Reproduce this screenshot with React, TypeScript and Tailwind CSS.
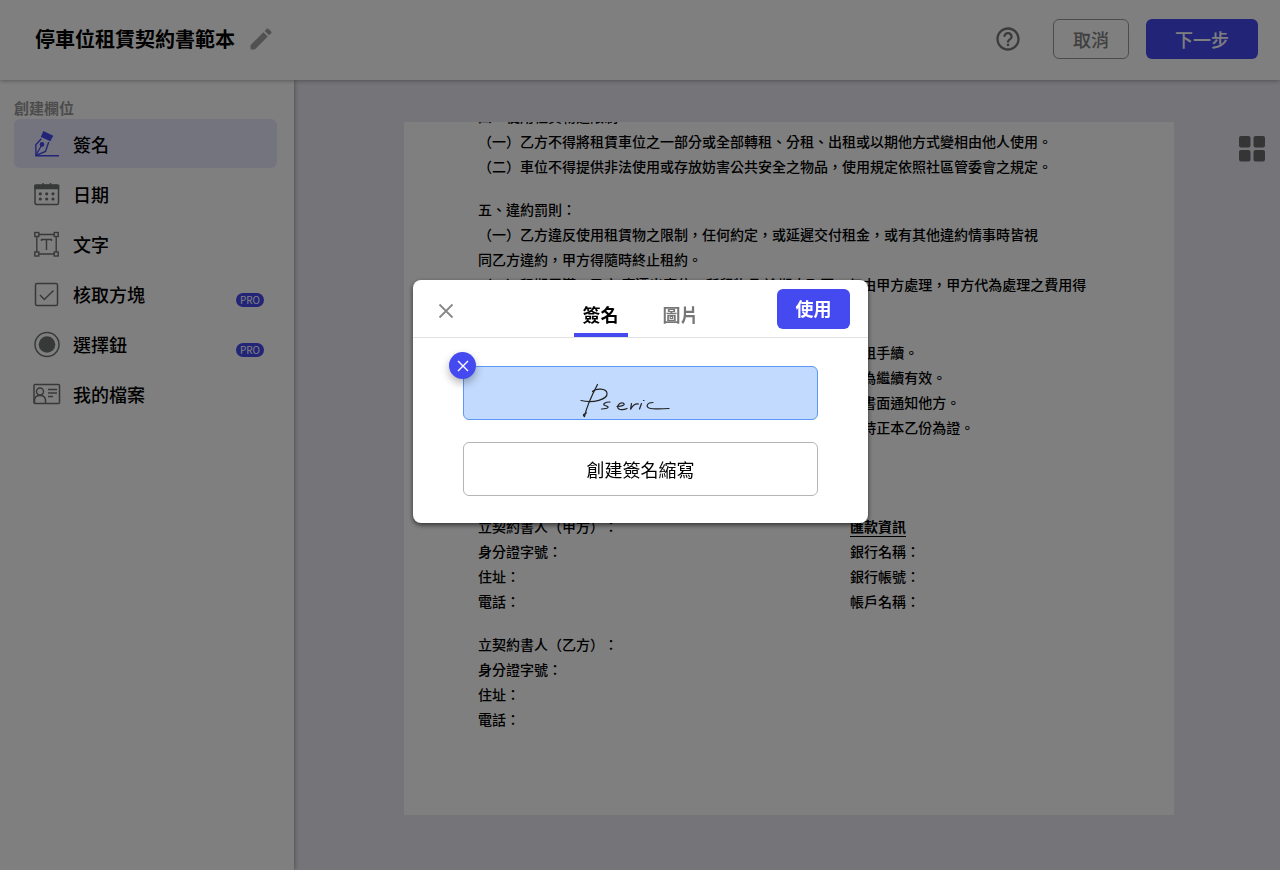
import React, { useState } from "react";

interface Field {
  name: string;
  icon: React.ReactNode;
  pro?: boolean;
}

const fields: Field[] = [
  {
    name: "簽名",
    icon: (
      <svg viewBox="0 0 28 28" className="h-7 w-7" fill="none" stroke="#4549f0" strokeWidth="1.4">
        <path d="M10.300 1 20.300 5.700 17.300 11.300 7.800 7z" fill="#4549f0" stroke="none" />
        <path d="M8.300 8.800 2.800 14.800 3 25.500 12.500 21.500 15.700 12" />
        <path d="M3 25 8.500 15.500M2.500 25.800h23.500" />
        <circle cx="9" cy="14.500" r="1.700" fill="#4549f0" />
      </svg>
    ),
  },
  {
    name: "日期",
    icon: (
      <svg viewBox="0 0 28 28" className="h-7 w-7" fill="none" stroke="#6f7270" strokeWidth="1.5">
        <rect x="2" y="5" width="23.5" height="19.5" rx="1.5" />
        <path d="M2 5.500h23.5v3H2z" fill="#6f7270" />
        <path d="M10 3v3M17.500 3v3" />
        <g fill="#6f7270" stroke="none">
          <circle cx="7.3" cy="13.8" r="1.6" />
          <circle cx="13.700" cy="13.8" r="1.6" />
          <circle cx="20" cy="13.8" r="1.6" />
          <circle cx="7.3" cy="19" r="1.6" />
          <circle cx="13.700" cy="19" r="1.6" />
          <circle cx="20" cy="19" r="1.6" />
        </g>
      </svg>
    ),
  },
  {
    name: "文字",
    icon: (
      <svg viewBox="0 0 28 28" className="h-7 w-7" fill="none" stroke="#6f7270" strokeWidth="1.4">
        <path d="M6 4.500h15M6 24h15M3.800 6.500v15.500M23.200 6.500v15.500M8.500 11V9.500h10V11M13.500 9.500v10.500" />
        <rect x="1.8" y="2.5" width="4" height="4" />
        <rect x="21.2" y="2.5" width="4" height="4" />
        <rect x="1.8" y="22" width="4" height="4" />
        <rect x="21.2" y="22" width="4" height="4" />
      </svg>
    ),
  },
  {
    name: "核取方塊",
    pro: true,
    icon: (
      <svg viewBox="0 0 28 28" className="h-7 w-7" fill="none" stroke="#6f7270" strokeWidth="1.5">
        <rect x="2.5" y="3.5" width="22" height="22" rx="1.5" />
        <path d="m7 15 4.300 4.500L20.500 10.500" />
      </svg>
    ),
  },
  {
    name: "選擇鈕",
    pro: true,
    icon: (
      <svg viewBox="0 0 28 28" className="h-7 w-7" fill="none" stroke="#6f7270" strokeWidth="1.5">
        <circle cx="14" cy="14.5" r="12" />
        <circle cx="14" cy="14.5" r="8.3" fill="#6f7270" stroke="none" />
      </svg>
    ),
  },
  {
    name: "我的檔案",
    icon: (
      <svg viewBox="0 0 28 28" className="h-7 w-7" fill="none" stroke="#6f7270" strokeWidth="1.5">
        <rect x="1" y="4.500" width="25.5" height="19" rx="1" />
        <circle cx="7" cy="11.500" r="3.5" />
        <path d="M1.500 23v-2.500c0-3 2-5 5.500-5s5.500 2 5.500 5V23M15 9.500h9M15 13h9M15 16.500h5" />
      </svg>
    ),
  },
];

const clauses: string[][] = [
  [
    "四、使用租賃物之限制",
    "（一）乙方不得將租賃車位之一部分或全部轉租、分租、出租或以期他方式變相由他人使用。",
    "（二）車位不得提供非法使用或存放妨害公共安全之物品，使用規定依照社區管委會之規定。",
  ],
  [
    "五、違約罰則：",
    "（一）乙方違反使用租賃物之限制，任何約定，或延遲交付租金，或有其他違約情事時皆視",
    "同乙方違約，甲方得隨時終止租約。",
    "（二）租期屆滿，乙方 應遷出車位，所留物品 逾期未取回，任由甲方處理，甲方代為處理之費用得",
    "向乙方求償。",
  ],
  [
    "六、租賃期滿 乙方如不續租，應於屆滿前 通知甲方並應辦理退租手續。",
    "七、租賃期滿 雙方如無異議，且乙方照常 給付租金者，本約視為繼續有效。",
    "八、租賃期間內 任何一方欲提前終止契約，應於 一個月之前以書面通知他方。",
    "九、本契約書 自簽約之日起生效，一式兩份，由 甲乙雙方各執持正本乙份為證。",
  ],
];

const Header: React.FC = () => {
  return (
    <header className="relative z-10 flex h-20 items-center justify-between bg-white pr-[22px] pb-0.5 pl-[35px] shadow-[0_1px_4px_rgba(0,0,0,0.3)]">
      <div className="flex items-center gap-3">
        <h1 className="text-xl font-bold">停車位租賃契約書範本</h1>
        <button aria-label="重新命名">
          <svg viewBox="0 0 24 24" className="h-7 w-7" fill="#a3a3a3">
            <path d="M3 17.250V21h3.750L17.810 9.940l-3.750-3.750L3 17.250zM20.710 7.040a1 1 0 0 0 0-1.410l-2.340-2.340a1 1 0 0 0-1.410 0l-1.830 1.830 3.750 3.750 1.830-1.830z" />
          </svg>
        </button>
      </div>
      <div className="flex items-center text-lg font-medium">
        <button aria-label="說明" className="mr-[31px]">
          <svg viewBox="0 0 24 24" className="h-7 w-7" fill="#777">
            <path d="M11 18h2v-2h-2v2zm1-16C6.480 2 2 6.480 2 12s4.480 10 10 10 10-4.480 10-10S17.520 2 12 2zm0 18c-4.410 0-8-3.590-8-8s3.590-8 8-8 8 3.590 8 8-3.590 8-8 8zm0-14c-2.210 0-4 1.790-4 4h2c0-1.100.9-2 2-2s2 .9 2 2c0 2-3 1.750-3 5h2c0-2.250 3-2.500 3-5 0-2.210-1.790-4-4-4z" />
          </svg>
        </button>
        <button className="mr-[17px] h-10 w-[76px] rounded-md border border-[#999] text-[#808080]">取消</button>
        <button className="h-10 w-28 rounded-md bg-[#4549f0] text-white">下一步</button>
      </div>
    </header>
  );
};

const Sidebar: React.FC = () => {
  const [active, setActive] = useState(0);

  return (
    <aside className="w-[294px] shrink-0 bg-white pt-4 pr-[17px] pl-[14px] shadow-[1px_0_4px_rgba(0,0,0,0.3)]">
      <h2 className="text-[15px] leading-[23px] font-bold text-[#999]">創建欄位</h2>
      <nav className="flex flex-col gap-px">
        {fields.map((field, i) => (
          <button
            key={field.name}
            onClick={() => setActive(i)}
            className={`flex h-[49px] w-full items-center rounded-md px-[19px] text-lg font-medium ${
              active === i ? "bg-[#e9e9ff]" : ""
            }`}
          >
            {field.icon}
            <span className="ml-3">{field.name}</span>
            {field.pro && (
              <span className="mt-3 -mr-1.5 ml-auto rounded-full bg-[#4549f0] px-1 text-[10px] leading-[14px] font-normal text-white">
                PRO
              </span>
            )}
          </button>
        ))}
      </nav>
    </aside>
  );
};

const Contract: React.FC = () => {
  return (
    <article className="min-w-0 flex-1 overflow-hidden bg-white pb-[83px] pl-[74px] text-sm leading-[25px] font-medium whitespace-nowrap [text-spacing-trim:space-all]">
      {/* scrolled a little, so the first heading is half out of view */}
      <div className="-mt-[18px] flex flex-col gap-[18px]">
        {clauses.map((lines) => (
          <section key={lines[0]}>
            {lines.map((line) => (
              <p key={line}>{line}</p>
            ))}
          </section>
        ))}
        <section className="mt-14 grid grid-cols-[372px_1fr]">
          <div>
            <p>立契約書人（甲方）：</p>
            <p>身分證字號：</p>
            <p>住址：</p>
            <p>電話：</p>
          </div>
          <div>
            <h3 className="font-bold underline underline-offset-4">匯款資訊</h3>
            <p>銀行名稱：</p>
            <p>銀行帳號：</p>
            <p>帳戶名稱：</p>
          </div>
        </section>
        <section>
          <p>立契約書人（乙方）：</p>
          <p>身分證字號：</p>
          <p>住址：</p>
          <p>電話：</p>
        </section>
      </div>
    </article>
  );
};

const Signature: React.FC = () => {
  return (
    <svg viewBox="0 0 110 44" className="mr-8 h-11 w-[110px]" fill="none" stroke="#222" strokeWidth="1.2" strokeLinecap="round">
      <path d="M27.500 9.500C22 20 17 30 14.500 41.500c-2-1-1-3 2-3.500" />
      <path d="M11 25.500c12 3 27-1 26-7.500-1-5-11-5-14.500-1.500" />
      <path d="M40 27c-5 0-8 2-5 3.500 5 1.500 4 3-3.500 3.500" />
      <path d="M47 31.500c6 0 9-2 6-3.500-4-1-8 5-3 6.500 3 .5 5 0 7-1" />
      <path d="M61.500 28.500l-1 6c2-4 4-6 8-5.500M71.500 28.500l-2 5.500M73.500 25.500h.5" />
      <path d="M83 27.500c-6 0-7.500 4-4 5.500 5 1.500 13 1 20 .5" />
    </svg>
  );
};

const SignatureDialog: React.FC = () => {
  const [tab, setTab] = useState("簽名");

  return (
    <div className="fixed inset-0 z-20 flex items-start justify-center bg-black/50 pt-[280px] pl-px">
      <div role="dialog" aria-label="簽名" className="w-[455px] rounded-lg bg-white shadow-[0_2px_5px_rgba(0,0,0,0.6)]">
        <div className="grid h-[58px] grid-cols-[1fr_auto_1fr] border-b border-[#e2e2e2] text-lg">
          <button aria-label="關閉" className="mt-1 ml-[25px] justify-self-start">
            <svg viewBox="0 0 16 16" className="h-4 w-4" stroke="#888" strokeWidth="1.8">
              <path d="M1.500 1.500l13 13M14.500 1.500l-13 13" />
            </svg>
          </button>
          <div role="tablist" className="flex gap-[26px]">
            {["簽名", "圖片"].map((name) => (
              <button
                key={name}
                role="tab"
                aria-selected={tab === name}
                onClick={() => setTab(name)}
                className={`w-[54px] border-b-4 pt-[15px] font-bold ${
                  tab === name ? "border-[#4549f0]" : "border-transparent text-[#777]"
                }`}
              >
                {name}
              </button>
            ))}
          </div>
          <button className="mt-[9px] mr-[18px] h-10 w-[73px] justify-self-end rounded-md bg-[#4549f0] pb-0.5 font-bold text-white">
            使用
          </button>
        </div>
        <div className="flex flex-col gap-[22px] px-[50px] pt-7 pb-[27px]">
          <div className="relative">
            <button
              aria-label="Pseric"
              className="flex h-[54px] w-full items-end justify-center rounded-md border border-[#5b98f8] bg-[#c2dafd]"
            >
              <Signature />
            </button>
            <button
              aria-label="刪除簽名"
              className="absolute -top-3.5 -left-3.5 flex h-[27px] w-[27px] items-center justify-center rounded-full bg-[#4549f0] shadow-[0_4px_8px_rgba(0,0,0,0.3)]"
            >
              <svg viewBox="0 0 12 12" className="h-3 w-3" stroke="#fff" strokeWidth="1.4">
                <path d="M1 1l10 10M11 1L1 11" />
              </svg>
            </button>
          </div>
          <button className="h-[54px] w-full rounded-md border border-[#b5b5b5] text-lg font-normal">
            創建簽名縮寫
          </button>
        </div>
      </div>
    </div>
  );
};

export default function App() {
  return (
    <div className="flex min-h-screen flex-col bg-[#eae9f1] font-['Noto_Sans_CJK_TC','Liberation_Sans',sans-serif] text-black">
      <Header />
      <div className="flex flex-1">
        <Sidebar />
        <main className="flex min-w-0 flex-1 items-start pt-[42px] pl-[110px]">
          <Contract />
          <div className="flex w-[106px] shrink-0 justify-end pt-3 pr-[14px]">
            <button aria-label="頁面縮圖">
              <svg viewBox="0 0 28 28" className="h-7 w-7" fill="#6b6b6b">
                <rect x="1" y="2" width="11.500" height="11.500" rx="2" />
                <rect x="15.500" y="2" width="11.500" height="11.500" rx="2" />
                <rect x="1" y="16" width="11.500" height="11.500" rx="2" />
                <rect x="15.500" y="16" width="11.500" height="11.500" rx="2" />
              </svg>
            </button>
          </div>
        </main>
      </div>
      <SignatureDialog />
    </div>
  );
}
